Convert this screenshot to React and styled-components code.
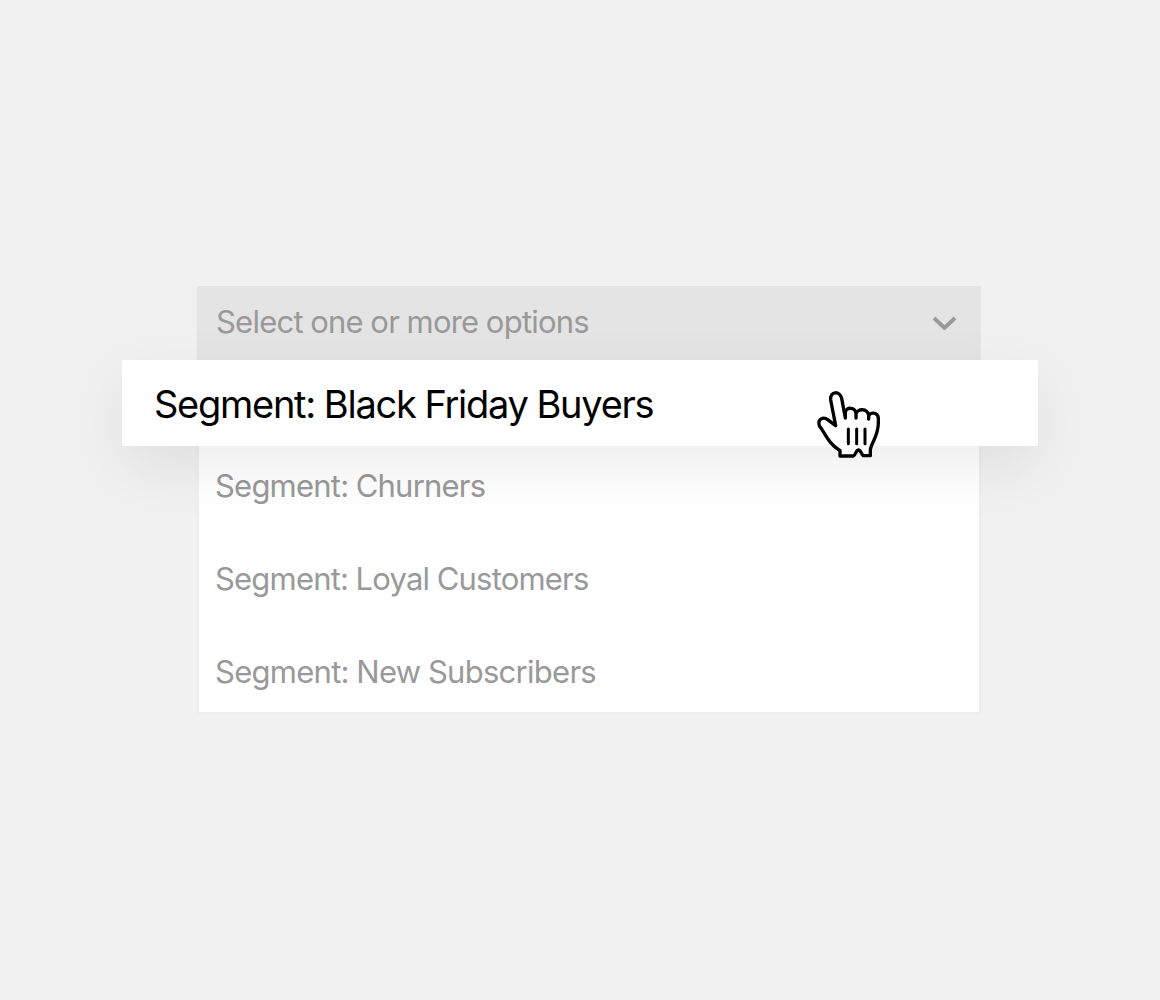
import React from 'react';
import styled, {createGlobalStyle} from 'styled-components';

const GlobalStyle = createGlobalStyle`
  * {
    box-sizing: border-box;
  }

  body {
    margin: 0;
    background: #f1f1f1;
    font-family: Inter, "Liberation Sans", sans-serif;
  }
`;

const Page = styled.main`
  display: flex;
  min-height: 1000px;
  padding: 286px 179px 0 197px;
  background: #f1f1f1;
`;

const Dropdown = styled.div`
  display: flex;
  flex-direction: column;
  width: 784px;
`;

const SelectBox = styled.div`
  display: flex;
  align-items: center;
  justify-content: space-between;
  height: 74px;
  padding: 0 24px 2px 19px;
  background: #e4e4e4;
`;

const Label = styled.span`
  font-size: ${({$large}) => ($large ? '38px' : '31px')};
  line-height: 38px;
  letter-spacing: ${({$spacing}) => $spacing}px;
  word-spacing: -0.5px;
  color: ${({$large}) => ($large ? '#000' : '#999')};
  white-space: nowrap;
`;

const Chevron = styled.svg`
  width: 25px;
  height: 15px;
`;

const ActiveOption = styled.div`
  position: relative;
  z-index: 1;
  display: flex;
  align-items: center;
  height: 86px;
  margin: 0 -57px 0 -75px;
  padding: 2px 32px 0;
  background: #fff;
  box-shadow: 0 20px 60px rgba(0, 0, 0, 0.08);
`;

const OptionList = styled.ul`
  display: flex;
  flex-direction: column;
  gap: 55px;
  height: 268px;
  margin: 0;
  padding: 21px 16px 0;
  list-style: none;
  background: #fff;
  border: 2px solid #eee;
  border-top: 0;
`;

const Option = styled.li`
  display: flex;
  height: 38px;
`;

const HandCursor = styled.svg`
  position: absolute;
  left: 693px;
  top: 28px;
  width: 70px;
  height: 72px;
`;

const options = [
    {name: 'Segment: Churners', spacing: -0.79},
    {name: 'Segment: Loyal Customers', spacing: -0.8},
    {name: 'Segment: New Subscribers', spacing: -0.72},
];

const App = () => {
    return (
        <Page>
            <GlobalStyle/>
            <Dropdown>
                <SelectBox>
                    <Label $spacing={-0.77}>Select one or more options</Label>
                    <Chevron viewBox="0 0 25 15" fill="none">
                        <path d="M2 3L12.5 13L23 3" stroke="#999" strokeWidth="3.8"/>
                    </Chevron>
                </SelectBox>
                <ActiveOption>
                    <Label $large $spacing={-1.27}>Segment: Black Friday Buyers</Label>
                    <HandCursor viewBox="45 24 210 216" fill="none">
                        <path
                            d="M107 137L92 60C89 32 120 32 125 55L136 114V98C137 80 166 80 168 101V114V103C171 84 204 84 206 107V117V109C208 95 235 95 235 116V130C235 168 213 190 211 210V227H190C184 224 183 210 175 210C168 210 168 224 160 228H120V212C82 188 77 161 58 137C52 117 70 109 83 119Z"
                            fill="#fff"
                            stroke="#000"
                            strokeWidth="10"
                            strokeLinejoin="round"
                        />
                        <path
                            d="M145 147V191M170 147V191M195 147V191"
                            stroke="#000"
                            strokeWidth="9"
                            strokeLinecap="round"
                        />
                    </HandCursor>
                </ActiveOption>
                <OptionList>
                    {options.map(option => (
                        <Option key={option.name}>
                            <Label $spacing={option.spacing}>{option.name}</Label>
                        </Option>
                    ))}
                </OptionList>
            </Dropdown>
        </Page>
    );
};

export default App;
